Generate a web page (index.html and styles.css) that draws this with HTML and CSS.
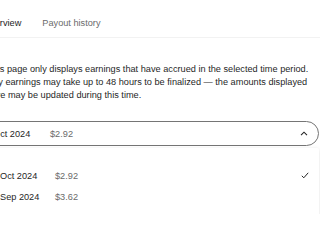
FILE: index.html
```html
<!DOCTYPE html>
<html lang="en">
<head>
<meta charset="utf-8">
<link rel="stylesheet" href="styles.css">
</head>
<body>
<div class="page">
  <nav class="tabs">
    <span class="tab tab-active">Overview</span>
    <span class="tab">Payout history</span>
  </nav>
  <p class="note">This page only displays earnings that have accrued in the selected time period.<br>Any earnings may take up to 48 hours to be finalized — the amounts displayed<br>here may be updated during this time.</p>
  <div class="picker">
    <div class="select">
      <span class="label">Oct 2024</span>
      <span class="amount">$2.92</span>
      <svg class="chev" width="8" height="5" viewBox="0 0 8 5"><path d="M1 4.2 L4 1.2 L7 4.2" fill="none" stroke="#242424" stroke-width="1.1"/></svg>
    </div>
    <ul class="menu">
      <li class="item"><span class="label">Oct 2024</span><span class="amount">$2.92</span>
        <svg class="check" width="8" height="7" viewBox="0 0 8 7"><path d="M0.8 3.8 L2.8 5.8 L7.2 0.8" fill="none" stroke="#242424" stroke-width="1"/></svg></li>
      <li class="item"><span class="label">Sep 2024</span><span class="amount">$3.62</span></li>
    </ul>
  </div>
</div>
</body>
</html>
```
FILE: styles.css
```css
html, body { margin: 0; padding: 0; background: #fff; }
body {
  font-family: "Liberation Sans", Arial, sans-serif;
  font-size: 9.2px;
  color: #1f1f1f;
  overflow: hidden;
  width: 320px;
  height: 214px;
}
.page { margin-left: -13px; width: 333px; }
.tabs {
  display: flex;
  gap: 21px;
  height: 38px;
  align-items: center;
  padding-top: 9px;
  box-sizing: border-box;
  margin-left: -4px;
  border-bottom: 1px solid #f2f2f2;
}
.tab { color: #6b6b6b; }
.tab-active { color: #242424; }
.note {
  margin: 25px 0 0 0;
  line-height: 13px;
  white-space: nowrap;
}
.picker { margin-top: 19px; margin-left: -6px; width: 338px; }
.select {
  height: 23px;
  border: 1px solid #757575;
  border-radius: 13px;
  display: flex;
  align-items: center;
  padding-left: 11px;
  padding-right: 10px;
}
.label { width: 57px; }
.amount { color: #6b6b6b; }
.chev { margin-left: auto; }
.menu {
  list-style: none;
  margin: 2px 0 0 0;
  padding: 17px 0 0 19px;
  height: 70px;
  box-shadow: 0 1px 4px rgba(0,0,0,0.12);
  border-radius: 2px;
}
.item {
  display: flex;
  align-items: center;
  height: 21px;
  padding-right: 10px;
}
.item .label { width: 55px; }
.check { margin-left: auto; }
```
